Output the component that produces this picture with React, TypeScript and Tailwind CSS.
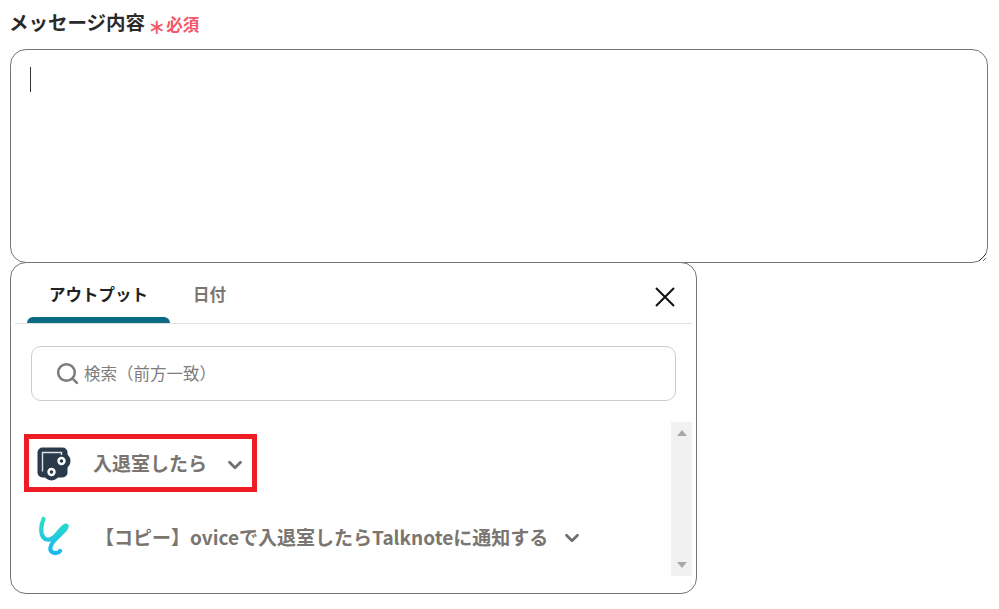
import React from "react";
import { ChevronDown, Search } from "lucide-react";

const font = { fontFamily: '"Noto Sans CJK JP", "Noto Sans", sans-serif' };

const OviceIcon = () => (
  <svg width="34" height="34" viewBox="0 0 34 34">
    <rect x="0.500" y="0.500" width="30" height="30" rx="5" fill="#2b3a4a" />
    <circle cx="25" cy="14" r="8.500" fill="#2b3a4a" />
    <circle cx="14.500" cy="25" r="8.500" fill="#2b3a4a" />
    <path d="M5.500 24.500V5.500H24.500V8" fill="none" stroke="#dfe3e7" strokeWidth="1.400" />
    <circle cx="24.500" cy="14" r="3" fill="#2b3a4a" stroke="#fff" strokeWidth="2.400" />
    <circle cx="14.500" cy="25" r="3" fill="#2b3a4a" stroke="#fff" strokeWidth="2.400" />
  </svg>
);

const TalknoteIcon = () => (
  <svg width="34" height="40" viewBox="0 0 34 40">
    <defs>
      <linearGradient id="tn" x1="0" y1="0" x2="0" y2="1">
        <stop offset="0" stopColor="#2adfc4" />
        <stop offset="1" stopColor="#1cb8f2" />
      </linearGradient>
    </defs>
    <path
      d="M5.500 3C3 9 2 17 5.500 21.500C9 25.500 14 24 19 18C23 13 28 8 28.500 10C29.500 13 20 20 15 26C12 30 11 35 15 36.500C18 37.500 20.500 37 22 35"
      fill="none"
      stroke="url(#tn)"
      strokeWidth="4.200"
      strokeLinecap="round"
      strokeLinejoin="round"
    />
  </svg>
);

export default function App() {
  return (
    <div className="w-[999px] h-[609px] bg-white overflow-hidden pl-[10px] pr-[11px]" style={font}>
      <div className="h-[49px] flex items-start pt-[8px]">
        <span className="-ml-px text-[19.500px] leading-[28px] font-bold text-[#2a2a2a]">メッセージ内容</span>
        <span className="ml-[3px] mt-[5px] text-[17px] leading-[28px] font-black text-[#f4566a]">＊</span>
        <span className="ml-[1px] mt-[2px] text-[16.500px] leading-[28px] font-bold text-[#f4566a]">必須</span>
      </div>

      <div className="relative h-[214px]">
        <textarea className="block w-full h-full border border-[#767676] rounded-[16px] bg-white outline-none" />
        <span className="absolute left-[20px] top-[18px] w-px h-[25px] bg-[#333]" />
      </div>

      <div className="w-[687px] h-[332px] border border-[#767676] rounded-[16px] bg-white -mt-px flex flex-col relative">
        <div className="mx-[4px] h-[61px] border-b border-[#e2e2e2] flex items-end justify-between shrink-0">
          <div className="flex items-end">
            <div className="ml-[12px] w-[143px] h-full">
              <div className="h-[54px] flex items-center justify-center pt-[9px] text-[16.500px] font-bold text-[#222]">
                アウトプット
              </div>
              <div className="h-[6px] bg-[#0b6b83] rounded-t-[6px]" />
            </div>
            <div className="ml-[23px] h-[60px] flex items-center pt-[3px] text-[16.500px] font-bold text-[#7a7570]">
              日付
            </div>
          </div>
          <svg width="20" height="20" viewBox="0 0 20 20" className="mr-[17px] mb-[16px]">
            <path d="M1 1L19 19M19 1L1 19" stroke="#111" strokeWidth="2" />
          </svg>
        </div>

        <div className="mx-[20px] mt-[22px] h-[55px] border border-[#cccccc] rounded-[10px] flex items-center pl-[23px] shrink-0">
          <Search size={25} strokeWidth={2.4} className="text-[#7b7b7b]" />
          <span className="ml-[4px] text-[16.500px] text-[#7d7d7d]">検索（前方一致）</span>
        </div>

        <div className="flex-1 relative">
          <div className="absolute left-[660px] top-[21px] w-[21px] h-[154px] bg-[#f1f1f1] flex flex-col justify-between items-center py-[8px]">
            <span className="w-0 h-0 border-x-[5px] border-x-transparent border-b-[6px] border-b-[#a8a8a8]" />
            <span className="w-0 h-0 border-x-[5px] border-x-transparent border-t-[6px] border-t-[#a8a8a8]" />
          </div>

          <div className="ml-[13px] mt-[33px] w-[233px] h-[58px] border-[5px] border-[#ee1c25] flex items-center">
            <span className="ml-[8px] mt-[2px] flex"><OviceIcon /></span>
            <span className="ml-[22px] text-[19px] font-bold text-[#7a7570]">入退室したら</span>
            <ChevronDown size={22} strokeWidth={3} className="ml-[17px] mt-[3px] text-[#6f6f6f]" />
          </div>

          <div className="ml-[27px] mt-[24px] h-[40px] flex items-center">
            <TalknoteIcon />
            <span className="ml-[23px] mt-[2px] text-[19px] font-bold text-[#7a7570]">【コピー】oviceで入退室したらTalknoteに通知する</span>
            <ChevronDown size={22} strokeWidth={3} className="ml-[13px] mt-[4px] text-[#6f6f6f]" />
          </div>
        </div>
      </div>
    </div>
  );
}
